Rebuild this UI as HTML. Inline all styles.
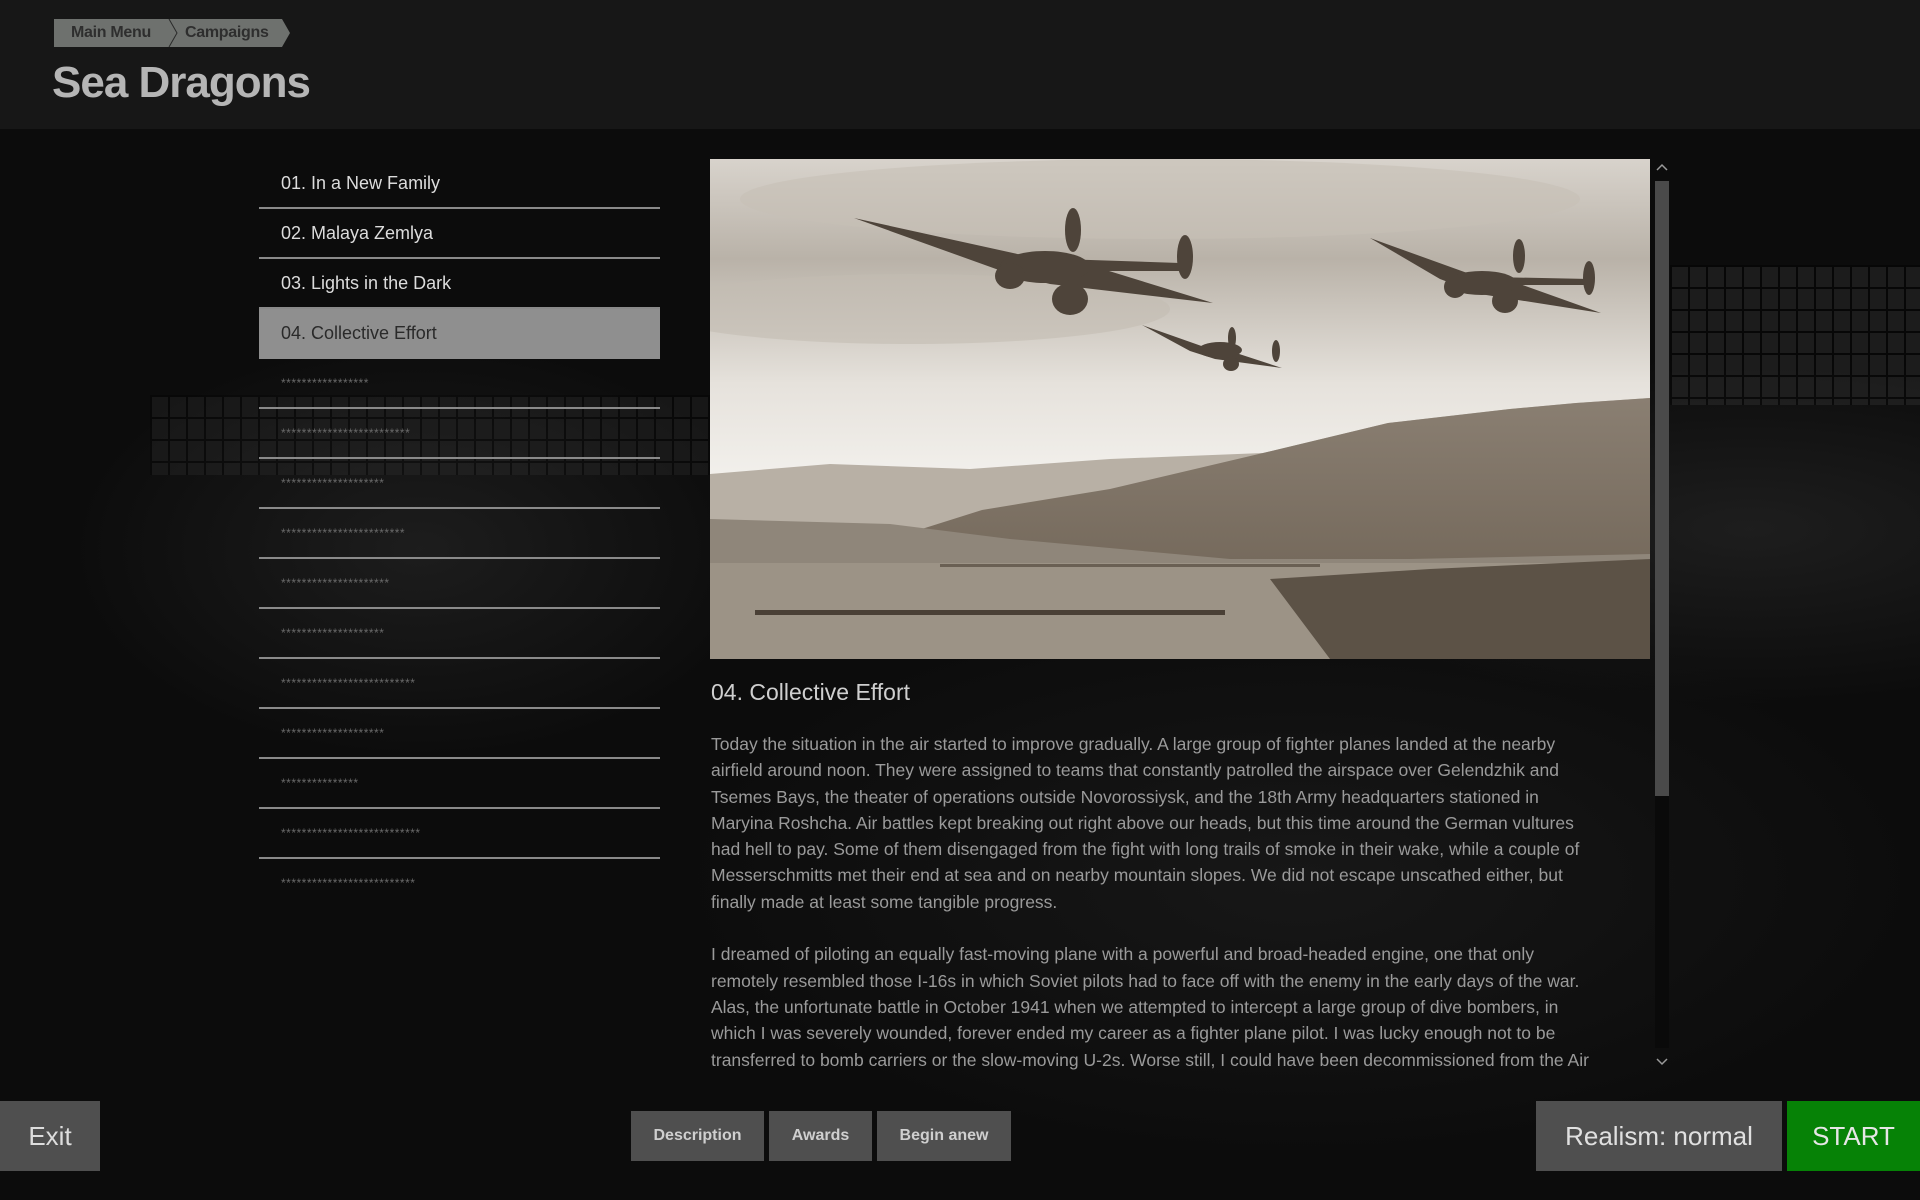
<!DOCTYPE html>
<html><head><meta charset="utf-8"><style>
*{margin:0;padding:0;box-sizing:border-box}
body{width:1920px;height:1200px;overflow:hidden;background:#0a0a0a;font-family:"Liberation Sans",sans-serif;position:relative}
.bg{position:absolute;left:0;top:129px;width:1920px;height:1071px;
background:
radial-gradient(ellipse 500px 300px at 420px 420px,rgba(60,60,60,.35),transparent 70%),
radial-gradient(ellipse 700px 250px at 1750px 400px,rgba(70,70,70,.3),transparent 70%),
radial-gradient(ellipse 900px 400px at 1300px 750px,rgba(40,40,40,.4),transparent 70%),
#0c0c0c}
.grid{position:absolute;left:1670px;top:265px;width:250px;height:140px;opacity:.35;
background-image:linear-gradient(90deg,#000 2px,transparent 2px),linear-gradient(#000 2px,transparent 2px);background-size:18px 22px;background-color:#3a3a3a}
.grid2{position:absolute;left:150px;top:395px;width:560px;height:80px;opacity:.25;
background-image:linear-gradient(90deg,#000 2px,transparent 2px),linear-gradient(#000 2px,transparent 2px);background-size:18px 22px;background-color:#3a3a3a}
.header{position:absolute;left:0;top:0;width:1920px;height:129px;background:#171717}
.title{position:absolute;left:52px;top:58px;font-size:44px;font-weight:bold;color:#b5b5b5;letter-spacing:-1px}
.list{position:absolute;left:259px;top:159px;width:401px}
.row{height:50px;border-bottom:2px solid #8a8a8a;color:#dcdcdc;font-size:18px;line-height:48px;padding-left:22px;white-space:nowrap}
.row.sel{background:#8f8f8f;color:#2a2a2a;border-bottom-color:transparent}
.row.st{color:#6a6a6a;font-size:12px;letter-spacing:0.5px}
.row.last{border-bottom:none}
.img{position:absolute;left:710px;top:159px;width:940px;height:500px;overflow:hidden}
.sb{position:absolute;left:1655px;top:181px;width:14px;height:615px;background:#4a4a4a}
.sbtrack{position:absolute;left:1655px;top:796px;width:14px;height:252px;background:#0a0a0a}
.h2{position:absolute;left:711px;top:679px;font-size:23px;color:#cfcfcf}
.txt{position:absolute;left:711px;top:731px;width:910px;height:341px;overflow:hidden;font-size:17.5px;line-height:26.3px;color:#9a9a9a;white-space:nowrap}
.btn{position:absolute;background:#4f4f4f;color:#cfcfcf;font-weight:bold;text-align:center}
</style></head><body>
<div class="bg"></div><div class="grid"></div><div class="grid2"></div>
<div class="header">
 <svg style="position:absolute;left:54px;top:19px" width="240" height="28"><polygon points="0,0 115,0 123,14 115,28 0,28" fill="#6e716e"/><polygon points="115,0 228,0 236,14 228,28 115,28 123,14" fill="#6e716e"/><polyline points="115,0 123,14 115,28" fill="none" stroke="#2a2a2a" stroke-width="1"/></svg>
 <div style="position:absolute;left:71px;top:19px;line-height:28px;font-size:16px;font-weight:bold;color:#2e2e2e;letter-spacing:-0.3px">Main Menu</div>
 <div style="position:absolute;left:185px;top:19px;line-height:28px;font-size:16px;font-weight:bold;color:#2e2e2e;letter-spacing:-0.3px">Campaigns</div>
 <div class="title">Sea Dragons</div>
</div>
<div class="list">
<div class="row">01. In a New Family</div>
<div class="row">02. Malaya Zemlya</div>
<div class="row">03. Lights in the Dark</div>
<div class="row sel">04. Collective Effort</div>
<div class="row st">*****************</div>
<div class="row st">*************************</div>
<div class="row st">********************</div>
<div class="row st">************************</div>
<div class="row st">*********************</div>
<div class="row st">********************</div>
<div class="row st">**************************</div>
<div class="row st">********************</div>
<div class="row st">***************</div>
<div class="row st">***************************</div>
<div class="row st last">**************************</div>
</div>
<div class="img"><svg width="940" height="500" viewBox="0 0 940 500">
<defs><linearGradient id="sky" x1="0" y1="0" x2="0" y2="1"><stop offset="0" stop-color="#d8d3cc"/><stop offset=".2" stop-color="#b9b2a8"/><stop offset=".45" stop-color="#e6e2dc"/><stop offset=".65" stop-color="#f3f1ed"/><stop offset="1" stop-color="#e8e4de"/></linearGradient>
<linearGradient id="mt" x1="0" y1="0" x2="0" y2="1"><stop offset="0" stop-color="#8a7f72"/><stop offset="1" stop-color="#6a5e50"/></linearGradient></defs>
<rect width="940" height="500" fill="url(#sky)"/>
<ellipse cx="450" cy="40" rx="420" ry="40" fill="#c7c0b6" opacity=".6"/>
<ellipse cx="200" cy="150" rx="260" ry="35" fill="#c3bcb2" opacity=".6"/>
<polygon points="0,315 120,305 260,310 400,300 553,294 678,264 800,250 866,244 940,239 940,500 0,500" fill="#b8b0a5"/>
<polygon points="180,380 272,351 400,330 553,294 678,264 800,250 866,244 940,239 940,500 180,500" fill="url(#mt)"/>
<polygon points="0,360 180,365 300,380 520,400 700,400 940,395 940,500 0,500" fill="#8f867a"/>
<rect x="0" y="404" width="940" height="96" fill="#9c9386"/>
<polygon points="560,420 720,410 940,400 940,500 620,500" fill="#5c5246"/>
<rect x="45" y="451" width="470" height="5" fill="#4a4036"/>
<rect x="230" y="405" width="380" height="3" fill="#6a6054"/>
<g fill="#4e443a">
<polygon points="144,59 330,100 360,100 503,144 340,125 300,115"/>
<ellipse cx="335" cy="108" rx="45" ry="16"/><ellipse cx="300" cy="117" rx="15" ry="13"/><ellipse cx="360" cy="140" rx="18" ry="16"/>
<polygon points="350,100 470,104 470,112 350,112"/>
<ellipse cx="363" cy="71" rx="8" ry="22"/><ellipse cx="475" cy="98" rx="8" ry="22"/>
<polygon points="660,79 760,115 790,118 891,154 770,135 730,120"/>
<ellipse cx="772" cy="124" rx="35" ry="12"/><ellipse cx="745" cy="128" rx="11" ry="11"/><ellipse cx="795" cy="142" rx="13" ry="12"/>
<polygon points="780,118 880,120 880,126 780,126"/>
<ellipse cx="809" cy="97" rx="6" ry="17"/><ellipse cx="879" cy="119" rx="6" ry="17"/>
<polygon points="432,166 500,190 520,192 572,209 505,200 480,192"/>
<ellipse cx="510" cy="191" rx="22" ry="8"/><ellipse cx="521" cy="205" rx="8" ry="7"/>
<ellipse cx="522" cy="179" rx="4" ry="11"/><ellipse cx="566" cy="192" rx="4" ry="11"/>
</g>
</svg></div>
<div class="sb"></div><div class="sbtrack"></div>
<svg style="position:absolute;left:1655px;top:1057px" width="14" height="10"><polyline points="2,2 7,7 12,2" fill="none" stroke="#9a9a9a" stroke-width="1.5"/></svg>
<svg style="position:absolute;left:1655px;top:162px" width="14" height="10"><polyline points="2,8 7,3 12,8" fill="none" stroke="#9a9a9a" stroke-width="1.5"/></svg>
<div class="h2">04. Collective Effort</div>
<div class="txt">Today the situation in the air started to improve gradually. A large group of fighter planes landed at the nearby<br>airfield around noon. They were assigned to teams that constantly patrolled the airspace over Gelendzhik and<br>Tsemes Bays, the theater of operations outside Novorossiysk, and the 18th Army headquarters stationed in<br>Maryina Roshcha. Air battles kept breaking out right above our heads, but this time around the German vultures<br>had hell to pay. Some of them disengaged from the fight with long trails of smoke in their wake, while a couple of<br>Messerschmitts met their end at sea and on nearby mountain slopes. We did not escape unscathed either, but<br>finally made at least some tangible progress.<br><br>I dreamed of piloting an equally fast-moving plane with a powerful and broad-headed engine, one that only<br>remotely resembled those I-16s in which Soviet pilots had to face off with the enemy in the early days of the war.<br>Alas, the unfortunate battle in October 1941 when we attempted to intercept a large group of dive bombers, in<br>which I was severely wounded, forever ended my career as a fighter plane pilot. I was lucky enough not to be<br>transferred to bomb carriers or the slow-moving U-2s. Worse still, I could have been decommissioned from the Air</div>
<div class="btn" style="left:0;top:1101px;width:100px;height:70px;line-height:70px;font-size:26px;font-weight:normal;color:#ddd">Exit</div>
<div class="btn" style="left:631px;top:1111px;width:133px;height:50px;line-height:50px;font-size:16px">Description</div>
<div class="btn" style="left:769px;top:1111px;width:103px;height:50px;line-height:50px;font-size:16px">Awards</div>
<div class="btn" style="left:877px;top:1111px;width:134px;height:50px;line-height:50px;font-size:16px">Begin anew</div>
<div class="btn" style="left:1536px;top:1101px;width:246px;height:70px;line-height:70px;font-size:26px;font-weight:normal;color:#e0e0e0">Realism: normal</div>
<div class="btn" style="left:1787px;top:1101px;width:133px;height:70px;line-height:70px;font-size:26px;font-weight:normal;background:#068206;color:#e6e6e6">START</div>
</body></html>
